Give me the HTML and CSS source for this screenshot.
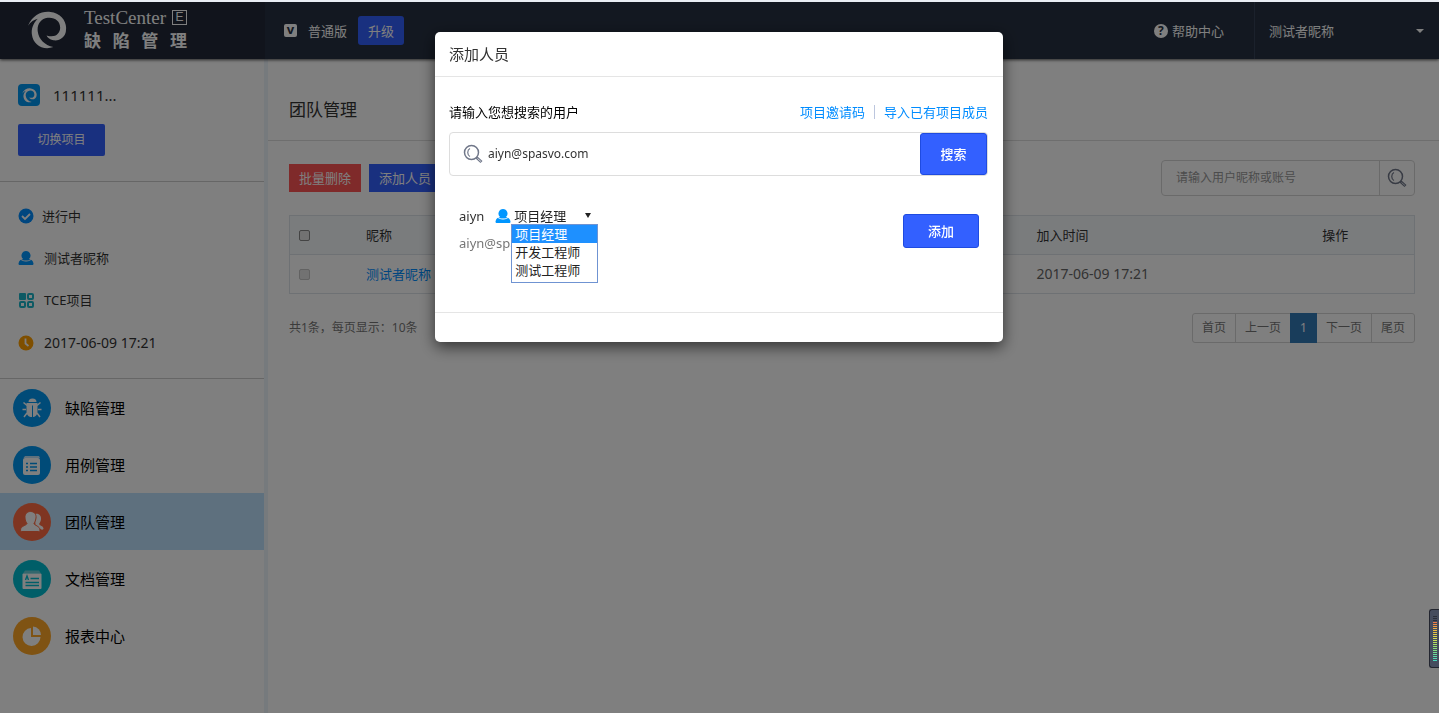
FILE: index.html
```html
<!DOCTYPE html>
<html lang="zh-CN">
  <head>
    <meta charset="UTF-8" />
    <meta name="viewport" content="width=device-width, initial-scale=1.0" />
    <title>团队管理</title>
    <link rel="stylesheet" href="styles.css" />
  </head>
  <body>
    <!-- Icon dùng chung -->
    <svg class="sprite" aria-hidden="true">
      <symbol id="icon-swirl" viewBox="0 0 40 40">
        <path d="M0 15C5 4 14 0 23 1C33 2 40 10 39 19C39 27 32 31 26 30C22 29 20 27 19 25C27 28 33 24 33 17C33 10 27 6 20 7C13 8 9 14 10 21C11 29 17 35 26 37C15 41 5 34 4 24C3 18 6 12 10 8C6 9 3 11 0 15Z" />
      </symbol>
      <symbol id="icon-user" viewBox="0 0 16 16">
        <path d="M8 1a4.600 4.600 0 0 1 3 8c2 .5 4 1.500 4.500 4.500 0 1-.5 1.500-1.500 1.500H2c-1 0-1.500-.5-1.500-1.500C1 10.500 3 9.500 5 9a4.600 4.600 0 0 1 3-8z" />
        <path d="M3 9.500c3 2 7 2 10 0" fill="none" stroke="#fff" stroke-width="1" />
      </symbol>
      <symbol id="icon-search" viewBox="0 0 20 20">
        <g fill="none" stroke="#707789">
          <circle cx="8.500" cy="8.500" r="7" stroke-width="1.500" />
          <path d="M7 4.500C4 6 4 11 7 12.500" stroke-width="1.200" />
          <path d="M13.500 13.500l5 4.500" stroke-width="3" />
          <path d="M14.500 14.500l3.500 3" stroke="#d5d8df" stroke-width="1" />
        </g>
      </symbol>
    </svg>

    <div class="page">
      <header class="header">
        <div class="header__brand">
          <svg class="header__logo"><use href="#icon-swirl" /></svg>
          <div class="header__name">
            <div class="header__name-en">TestCenter<span class="header__edition">E</span></div>
            <div class="header__name-cn"><span>缺</span><span>陷</span><span>管</span><span>理</span></div>
          </div>
        </div>
        <div class="header__plan">
          <span class="header__badge">v</span>
          <span>普通版</span>
          <button type="button" class="header__upgrade">升级</button>
        </div>
        <a href="#" class="header__help"><span class="header__help-icon">?</span>帮助中心</a>
        <button type="button" class="header__account">测试者昵称<span class="header__caret"></span></button>
      </header>

      <div class="layout">
        <aside class="sidebar">
          <section class="project">
            <div class="project__title">
              <span class="project__logo"><svg><use href="#icon-swirl" /></svg></span>
              <span>111111...</span>
            </div>
            <button type="button" class="project__switch">切换项目</button>
          </section>

          <ul class="info">
            <li class="info__item info__item--status">
              <svg class="info__icon" viewBox="0 0 16 16"><circle cx="8" cy="8" r="7.500" fill="#008cff" /><path d="M4 8l3 3 5-5" fill="none" stroke="#fff" stroke-width="1.800" /></svg>
              进行中
            </li>
            <li class="info__item">
              <svg class="info__icon info__icon--user"><use href="#icon-user" /></svg>
              测试者昵称
            </li>
            <li class="info__item">
              <svg class="info__icon" viewBox="0 0 16 16"><rect x="1" y="1" width="7" height="7" rx="1" fill="#1bb5c8" /><g fill="none" stroke="#1bb5c8" stroke-width="2"><rect x="10" y="2" width="5" height="5" rx="1" /><rect x="2" y="10" width="5" height="5" rx="1" /><rect x="10" y="10" width="5" height="5" rx="1" /></g></svg>
              TCE项目
            </li>
            <li class="info__item info__item--date">
              <svg class="info__icon" viewBox="0 0 16 16"><circle cx="8" cy="8" r="7.500" fill="#ff9f00" /><path d="M7.500 3.500v5l3 2.500" fill="none" stroke="#fff" stroke-width="1.800" /></svg>
              2017-06-09 17:21
            </li>
          </ul>

          <nav class="menu">
            <a href="#" class="menu__item">
              <svg class="menu__icon" viewBox="0 0 38 38">
                <circle cx="19" cy="19" r="19" fill="#0096f0" />
                <path d="M15.500 13a4 3.500 0 0 1 8 0z" fill="#fff" />
                <path d="M13.500 14h11v8c0 4-2 6-5.500 6s-5.500-2-5.500-6z" fill="#fff" />
                <path d="M19.500 16.500V28" stroke="#0096f0" stroke-width="1" />
                <path d="M14 16.500l-3.500-3M24 16.500l3.500-3M13 20.500H9.500M25 20.500h3.500M14 24l-3 4M24 24l3 4" stroke="#fff" stroke-width="1.500" fill="none" />
              </svg>
              缺陷管理
            </a>
            <a href="#" class="menu__item">
              <svg class="menu__icon" viewBox="0 0 38 38">
                <circle cx="19" cy="19" r="19" fill="#0096f0" />
                <path d="M12 10h14l1 2H10.500z" fill="#bfe2fa" />
                <rect x="10" y="12" width="17" height="17" rx="2" fill="#fff" />
                <path d="M13 17.500h2M13 21h2M13 24.500h2M17 17.500h7M17 21h7M17 24.500h7" stroke="#0096f0" stroke-width="1.500" />
              </svg>
              用例管理
            </a>
            <a href="#" class="menu__item menu__item--active">
              <svg class="menu__icon" viewBox="0 0 38 38">
                <circle cx="19" cy="19" r="19" fill="#ff6b42" />
                <path d="M22 11c4-1 6.500 2 6 5.500-.3 2.500-1.500 3.500-2 4.500.5 1.500 4.500 2 4.500 4.500 0 1-1 1.500-2 1l-6-3z" fill="#fff" />
                <path d="M17.500 8.500c4 0 6 3 5.500 6.500-.3 3-1.700 4.500-2 5.500.3 2 6 2.500 6 6.500 0 1-.5 1.500-1.500 1.500H9c-1 0-1.500-.5-1.500-1.500 0-4 6-4.500 6.500-6.500-.3-1-2-2.500-2-5.500-.3-4 2-6.500 5.500-6.500z" fill="#fff" stroke="#ff6b42" stroke-width="1" />
              </svg>
              团队管理
            </a>
            <a href="#" class="menu__item">
              <svg class="menu__icon" viewBox="0 0 38 38">
                <circle cx="19" cy="19" r="19" fill="#00bcd0" />
                <path d="M12 10.500h14l2 3H10z" fill="#66cfdb" />
                <rect x="9.500" y="13.500" width="19" height="15.500" rx="1" fill="#fff" />
                <path d="M12.500 20l1.500-4 1.500 4M17.500 18.500h8.500M12.500 22.500H26M12.500 25.500H26" stroke="#00bcd0" stroke-width="1.400" fill="none" />
              </svg>
              文档管理
            </a>
            <a href="#" class="menu__item">
              <svg class="menu__icon" viewBox="0 0 38 38">
                <circle cx="19" cy="19" r="19" fill="#ffa726" />
                <path d="M18 11v9h9.500A9 9 0 1 1 18 11z" fill="#fff" />
                <path d="M20 9.500a8.500 8.500 0 0 1 8 8.500h-8z" fill="#fff" />
              </svg>
              报表中心
            </a>
          </nav>
        </aside>

        <main class="content">
          <h1 class="content__title">团队管理</h1>
          <div class="content__body">
            <div class="toolbar">
              <button type="button" class="toolbar__btn toolbar__btn--danger">批量删除</button>
              <button type="button" class="toolbar__btn">添加人员</button>
              <div class="toolbar__search">
                <input type="text" placeholder="请输入用户昵称或账号" aria-label="请输入用户昵称或账号" />
                <button type="button" aria-label="搜索"><svg><use href="#icon-search" /></svg></button>
              </div>
            </div>

            <table class="members">
              <thead>
                <tr>
                  <th class="members__check"><input type="checkbox" aria-label="全选" /></th>
                  <th class="members__name">昵称</th>
                  <th class="members__time">加入时间</th>
                  <th>操作</th>
                </tr>
              </thead>
              <tbody>
                <tr>
                  <td><input type="checkbox" aria-label="测试者昵称" disabled /></td>
                  <td><a href="#">测试者昵称</a></td>
                  <td class="members__date">2017-06-09 17:21</td>
                  <td></td>
                </tr>
              </tbody>
            </table>

            <div class="paging">
              <span class="paging__total">共1条，每页显示：10条</span>
              <nav class="paging__list">
                <a href="#">首页</a>
                <a href="#">上一页</a>
                <a href="#" class="paging__current">1</a>
                <a href="#">下一页</a>
                <a href="#">尾页</a>
              </nav>
            </div>
          </div>
        </main>
      </div>
    </div>

    <!-- Hộp thoại thêm thành viên -->
    <div class="backdrop">
      <div class="modal" role="dialog" aria-labelledby="modal-title">
        <h2 class="modal__header" id="modal-title">添加人员</h2>
        <div class="modal__body">
          <div class="modal__top">
            <label for="user-search">请输入您想搜索的用户</label>
            <div class="modal__links">
              <a href="#">项目邀请码</a>
              <span class="modal__divider"></span>
              <a href="#">导入已有项目成员</a>
            </div>
          </div>
          <div class="modal__search">
            <svg><use href="#icon-search" /></svg>
            <input type="text" id="user-search" value="aiyn@spasvo.com" />
            <button type="button">搜索</button>
          </div>
          <div class="result">
            <div class="result__info">
              <div class="result__line">
                <span class="result__name">aiyn</span>
                <svg class="result__icon"><use href="#icon-user" /></svg>
                <div class="role">
                  <select class="role__select" aria-label="角色">
                    <option>项目经理</option>
                    <option>开发工程师</option>
                    <option>测试工程师</option>
                  </select>
                  <ul class="role__list">
                    <li class="role__option role__option--selected">项目经理</li>
                    <li class="role__option">开发工程师</li>
                    <li class="role__option">测试工程师</li>
                  </ul>
                </div>
              </div>
              <div class="result__mail">aiyn@spasvo.com</div>
            </div>
            <button type="button" class="result__add">添加</button>
          </div>
        </div>
        <div class="modal__footer"></div>
      </div>
    </div>

    <div class="meter"></div>
  </body>
</html>
```
FILE: styles.css
```css
* {
  box-sizing: border-box;
}

body {
  margin: 0;
  font-family: "Noto Sans", "Noto Sans CJK SC", sans-serif;
  font-size: 13px;
  line-height: 20px;
  color: #333;
  background-color: #fff;
  border-top: 2px solid #e9edf4;
}

button,
input,
select {
  font-family: inherit;
  font-size: inherit;
  line-height: inherit;
}

button {
  cursor: pointer;
}

a {
  color: #008cff;
  text-decoration: none;
}

ul {
  margin: 0;
  padding: 0;
  list-style: none;
}

.sprite {
  display: none;
}

.page {
  display: flex;
  flex-direction: column;
  min-height: calc(100vh - 2px);
}

/* Header */
.header {
  position: relative;
  display: flex;
  align-items: center;
  height: 57px;
  color: #fff;
  background-color: #273142;
  box-shadow: 0 1px 3px rgba(0, 0, 0, 0.7);
}

.header__brand {
  display: flex;
  align-items: center;
  align-self: stretch;
  gap: 17px;
  width: 265px;
  padding-left: 28px;
  background-color: #222939;
}

.header__logo {
  width: 39px;
  height: 39px;
  fill: #fff;
}

.header__name {
  width: 103px;
  font-family: "Liberation Serif", "Noto Sans CJK SC", serif;
}

.header__name-en {
  display: flex;
  align-items: center;
  justify-content: space-between;
  font-size: 19px;
}

.header__edition {
  width: 15px;
  height: 15px;
  border: 1px solid #fff;
  font-family: "Liberation Sans", sans-serif;
  font-size: 12px;
  line-height: 13px;
  text-align: center;
}

.header__name-cn {
  display: flex;
  justify-content: space-between;
  padding-top: 2px;
  font-size: 17px;
  font-weight: bold;
  line-height: 24px;
}

.header__plan {
  display: flex;
  align-items: center;
  flex: 1;
  gap: 11px;
  padding-left: 19px;
}

.header__badge {
  width: 13px;
  height: 13px;
  border-radius: 2px;
  font-weight: bold;
  line-height: 11px;
  text-align: center;
  color: #273142;
  background-color: #fff;
}

.header__upgrade {
  width: 46px;
  height: 29px;
  padding: 0;
  border: none;
  border-radius: 3px;
  color: #fff;
  background-color: #3360ff;
}

.header__help {
  display: flex;
  align-items: center;
  gap: 4px;
  padding-right: 30px;
  color: #fff;
}

.header__help-icon {
  width: 14px;
  height: 14px;
  border-radius: 50%;
  font-size: 12px;
  font-weight: bold;
  line-height: 14px;
  text-align: center;
  color: #273142;
  background-color: #fff;
}

.header__account {
  display: flex;
  align-items: center;
  align-self: stretch;
  justify-content: space-between;
  width: 185px;
  padding: 0 15px 0 14px;
  border: none;
  border-left: 1px solid #364259;
  color: #fff;
  background: none;
}

.header__caret {
  border: 4px solid transparent;
  border-top-color: #fff;
  border-bottom: none;
}

/* Sidebar */
.layout {
  display: flex;
  flex: 1;
}

.sidebar {
  flex: none;
  width: 268px;
  border-right: 4px solid #edf4fb;
}

.project {
  padding: 24px 18px 25px;
  border-bottom: 1px solid #ccc;
}

.project__title {
  display: flex;
  align-items: center;
  gap: 13px;
  margin-bottom: 17px;
  font-size: 15px;
  line-height: 24px;
}

.project__logo {
  display: flex;
  align-items: center;
  justify-content: center;
  width: 22px;
  height: 22px;
  border-radius: 4px;
  background-color: #0096f0;
}

.project__logo svg {
  width: 15px;
  height: 15px;
  fill: #fff;
}

.project__switch {
  width: 87px;
  height: 32px;
  padding: 0;
  border: none;
  border-radius: 2px;
  font-size: 12px;
  color: #fff;
  background-color: #3360ff;
}

.info {
  padding: 13px 18px;
  border-bottom: 1px solid #ccc;
}

.info__item {
  display: flex;
  align-items: center;
  gap: 10px;
  height: 42px;
}

.info__item--status {
  gap: 8px;
}

.info__item--date {
  height: 44px;
  font-size: 14px;
}

.info__icon {
  width: 16px;
  height: 16px;
}

.info__icon--user {
  fill: #0096ff;
}

.menu__item {
  display: flex;
  align-items: center;
  gap: 14px;
  height: 57px;
  padding: 0 13px;
  font-size: 15px;
  color: #000;
}

.menu__item--active {
  background-color: #bce0fc;
}

.menu__icon {
  width: 38px;
  height: 38px;
}

/* Content */
.content {
  flex: 1;
}

.content__title {
  margin: 0;
  padding: 39px 21px 18px;
  border-bottom: 1px solid #ddd;
  font-size: 17px;
  font-weight: normal;
  line-height: 24px;
}

.content__body {
  padding: 19px 24px 0 21px;
}

.toolbar {
  display: flex;
  align-items: center;
  gap: 8px;
  margin-bottom: 19px;
}

.toolbar__btn {
  width: 72px;
  height: 28px;
  padding: 0;
  border: none;
  color: #fff;
  background-color: #3360ff;
}

.toolbar__btn--danger {
  background-color: #ff5555;
}

.toolbar__search {
  display: flex;
  width: 254px;
  height: 36px;
  margin-left: auto;
  border: 1px solid #d5d5d5;
  border-radius: 4px;
}

.toolbar__search input {
  flex: 1;
  min-width: 0;
  padding: 0 14px;
  border: none;
  font-size: 12px;
  background: none;
}

.toolbar__search input::placeholder {
  color: #999;
}

.toolbar__search button {
  display: flex;
  align-items: center;
  justify-content: center;
  width: 35px;
  padding: 0;
  border: none;
  border-left: 1px solid #d5d5d5;
  background: none;
}

.toolbar__search svg,
.modal__search svg {
  width: 20px;
  height: 20px;
}

.members {
  width: 100%;
  border: 1px solid #dde2e8;
  border-collapse: collapse;
  table-layout: fixed;
}

.members th,
.members td {
  height: 39px;
  padding: 0 9px;
  border-bottom: 1px solid #dde2e8;
  font-weight: normal;
  text-align: left;
}

.members th {
  background-color: #f5f8fb;
}

.members input {
  display: block;
  width: 11px;
  height: 11px;
  margin: 0;
  border: 1px solid #888;
  border-radius: 2px;
  appearance: none;
  background-color: #e4e4e4;
}

.members input:disabled {
  border-color: #c4c4c4;
}

.members__check {
  width: 6%;
}

.members__name {
  width: 59.6%;
}

.members__time {
  width: 25.4%;
}

.members .members__date {
  font-size: 14px;
  color: #666;
}

.paging {
  display: flex;
  align-items: center;
  justify-content: space-between;
  margin-top: 19px;
  font-size: 12px;
  color: #777;
}

.paging__list {
  display: flex;
  height: 30px;
  border: 1px solid #d5d5d5;
  border-radius: 3px;
}

.paging__list a {
  padding: 4px 9px;
  border-left: 1px solid #d5d5d5;
  color: #777;
}

.paging__list a:first-child,
.paging__list .paging__current,
.paging__list .paging__current + a {
  border-left: none;
}

.paging__list .paging__current {
  margin: -1px 0;
  padding: 5px 10px;
  color: #fff;
  background-color: #337ab7;
}

/* Modal */
.backdrop {
  position: fixed;
  inset: 2px 0 0;
  display: flex;
  align-items: flex-start;
  justify-content: center;
  padding: 30px 1px 0 0;
  background-color: rgba(0, 0, 0, 0.5);
}

.modal {
  width: 568px;
  border-radius: 5px;
  background-color: #fff;
  box-shadow: 0 5px 15px rgba(0, 0, 0, 0.6);
}

.modal__header {
  margin: 0;
  padding: 12px 14px;
  border-bottom: 1px solid #e5e5e5;
  font-size: 15px;
  font-weight: normal;
  line-height: 20px;
}

.modal__body {
  padding: 25px 15px 59px 14px;
}

.modal__footer {
  height: 30px;
  border-top: 1px solid #e5e5e5;
}

.modal__top {
  display: flex;
  justify-content: space-between;
  margin-bottom: 10px;
  color: #000;
}

.modal__links {
  display: flex;
  align-items: center;
  gap: 9px;
}

.modal__divider {
  height: 14px;
  border-left: 1px solid #bcc6de;
}

.modal__search {
  display: flex;
  align-items: center;
  height: 44px;
  padding-left: 13px;
  border: 1px solid #ddd;
  border-radius: 4px;
}

.modal__search input {
  flex: 1;
  min-width: 0;
  padding: 0 5px;
  border: none;
  outline: none;
  font-size: 12px;
  color: #333;
}

.modal__search button,
.result__add {
  padding: 0;
  border: 1px solid #1f4be0;
  border-radius: 3px;
  font-weight: 500;
  color: #fff;
  background-color: #3360ff;
}

.modal__search button {
  width: 67px;
  height: 42px;
}

.result {
  display: flex;
  align-items: flex-start;
  justify-content: space-between;
  padding: 30px 9px 0 10px;
}

.result__add {
  width: 76px;
  height: 34px;
  margin-top: 8px;
}

.result__line {
  display: flex;
  align-items: center;
  height: 20px;
  margin-bottom: 7px;
}

.result__name {
  margin-right: 11px;
}

.result__icon {
  width: 16px;
  height: 16px;
  fill: #0096ff;
}

.result__mail {
  color: #777;
}

.role {
  position: relative;
}

.role__select {
  width: 87px;
  height: 20px;
  padding: 0 3px;
  border: none;
  outline: none;
  color: #222;
  appearance: none;
  background: none;
}

.role::after {
  content: "";
  position: absolute;
  top: 7px;
  right: 7px;
  border: 3px solid transparent;
  border-top: 5px solid #222;
  border-bottom: none;
}

.role__list {
  position: absolute;
  top: 18px;
  left: 0;
  width: 87px;
  height: 59px;
  border: 1px solid #6f93d2;
  background-color: #fff;
}

.role__option {
  height: 18px;
  padding-left: 3px;
  line-height: 18px;
  white-space: nowrap;
  color: #222;
}

.role__option--selected {
  color: #fff;
  background-color: #1e90ff;
}

/* Thanh đo ở mép phải */
.meter {
  position: fixed;
  right: 0;
  bottom: 45px;
  width: 10px;
  height: 59px;
  padding: 6px 2px 6px 3px;
  border: 1px solid #22252f;
  border-right: none;
  border-radius: 3px 0 0 3px;
  background-color: #454c5e;
}

.meter::before {
  content: "";
  display: block;
  height: 100%;
  background-image: repeating-linear-gradient(transparent 0 1px, #454c5e 1px 2px), linear-gradient(#2a2e3a 12%, #f0764a 13%, #f0b840 30%, #d8dc50 50%, #8fe070 70%, #45d6c0);
}
```
